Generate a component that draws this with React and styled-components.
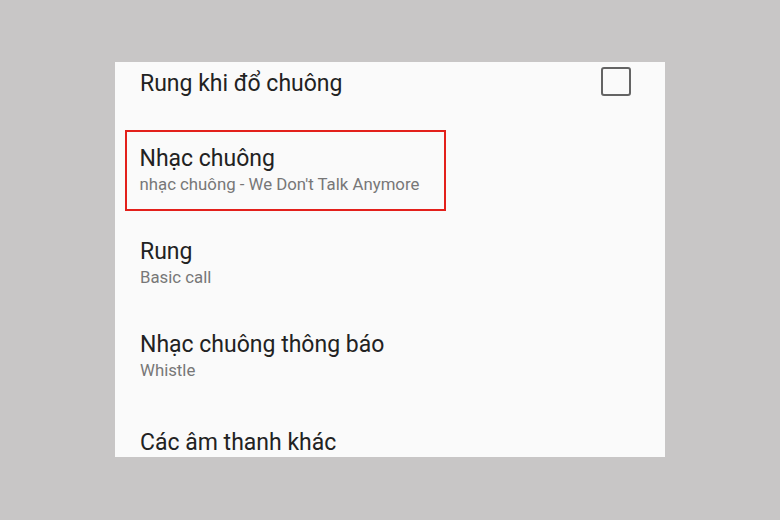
import React from "react";
import styled, { createGlobalStyle } from "styled-components";

const GlobalStyle = createGlobalStyle`
	html, body {
		margin: 0;
		padding: 0;
		background: #c8c6c6;
	}
	body {
		font-family: Roboto, "Noto Sans", sans-serif;
	}
`;

const Page = styled.div`
	width: 780px;
	height: 520px;
	padding: 62px 115px 0;
	box-sizing: border-box;
	background: #c8c6c6;
`;

const Panel = styled.div`
	width: 550px;
	height: 395px;
	background: #fafafa;
	overflow: hidden;
`;

const List = styled.div`
	display: flex;
	flex-direction: column;
	margin-top: -19px;
`;

// rows with only a title are a bit taller than those with a summary
const Row = styled.div`
	display: flex;
	align-items: center;
	justify-content: space-between;
	padding: ${(p) => (p.$single ? "26.5px 34px 26.5px 25px" : "21.5px 34px 21.5px 25px")};
`;

const Texts = styled.div`
	display: flex;
	flex-direction: column;
`;

const Title = styled.div`
	font-size: 23px;
	line-height: 28px;
	color: #222222;
`;

const Summary = styled.div`
	font-size: 16.8px;
	line-height: 22px;
	color: #777777;
`;

const Highlight = styled.div`
	display: flex;
	flex-direction: column;
	margin: -15.5px 0 -15.5px -15px;
	padding: 13px 25px 13.5px 12.5px;
	border: 2.5px solid #e3201b;
`;

const Checkbox = styled.div`
	width: 26px;
	height: 25px;
	border: 2px solid #646464;
	border-radius: 3px;
	margin-top: -4px;
`;

const items = [
	{ title: "Rung", summary: "Basic call" },
	{ title: "Nhạc chuông thông báo", summary: "Whistle" },
];

const App = () => {
	return (
		<Page>
			<GlobalStyle />
			<Panel>
				<List>
					<Row $single>
						<Title>Rung khi đổ chuông</Title>
						<Checkbox />
					</Row>
					<Row>
						<Highlight>
							<Title>Nhạc chuông</Title>
							<Summary>nhạc chuông - We Don't Talk Anymore</Summary>
						</Highlight>
					</Row>
					{items.map((it) => (
						<Row key={it.title}>
							<Texts>
								<Title>{it.title}</Title>
								<Summary>{it.summary}</Summary>
							</Texts>
						</Row>
					))}
					<Row $single>
						<Title>Các âm thanh khác</Title>
					</Row>
				</List>
			</Panel>
		</Page>
	);
};

export default App;
